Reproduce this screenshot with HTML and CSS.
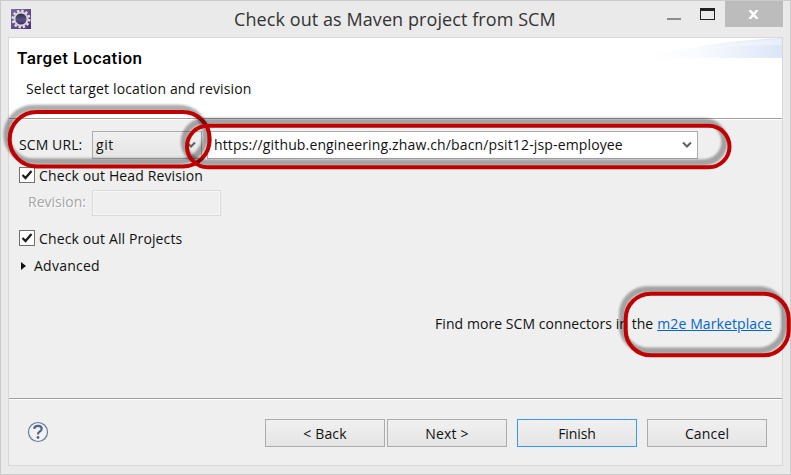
FILE: index.html
```html
<!DOCTYPE html>
<html lang="en">
<head>
<meta charset="utf-8">
<title>Check out as Maven project from SCM</title>
<link rel="stylesheet" href="styles.css">
</head>
<body>
<div class="window">
  <header class="titlebar">
    <svg class="app-icon" width="20" height="20" viewBox="0 0 20 20">
      <defs><linearGradient id="purple" x2="1" y2="1"><stop offset="0" stop-color="#7b68a6"/><stop offset="1" stop-color="#4b2d7d"/></linearGradient>
      <linearGradient id="core" x2="0" y2="1"><stop offset="0" stop-color="#252536"/><stop offset=".55" stop-color="#5b5188"/><stop offset="1" stop-color="#35265d"/></linearGradient></defs>
      <rect width="20" height="20" fill="url(#purple)"/>
      <circle cx="10" cy="10" r="8.3" fill="none" stroke="#e4e0e2" stroke-width="2.4" stroke-dasharray="2.4 1.946"/>
      <circle cx="10" cy="10" r="6.6" fill="url(#core)" stroke="#d8d4d6" stroke-width="2"/>
    </svg>
    <h1 class="title"><span>Check out as Maven project from SCM</span></h1>
    <div class="controls">
      <i class="minimize"></i><i class="maximize"></i>
      <span class="close"><svg width="11" height="9" viewBox="0 0 11 9"><path d="M1.5 0L9.5 9M9.5 0L1.5 9" stroke="#fff" stroke-width="2.5"/></svg></span>
    </div>
  </header>
  <main class="client">
    <section class="banner">
      <svg class="swoosh" width="140" height="20" viewBox="0 0 140 20">
        <defs><linearGradient id="blue"><stop offset="0" stop-color="#fff"/><stop offset=".4" stop-color="#f9fbfe"/><stop offset="1" stop-color="#dce5f8"/></linearGradient></defs>
        <path d="M0 20Q65 3 140 0V20Z" fill="url(#blue)"/>
        <path d="M55 12Q95 4 140 1V7Q95 7 55 12Z" fill="#fff" opacity=".35"/>
      </svg>
      <h2 class="heading"><span>Target Location</span></h2>
      <p class="subtitle"><span>Select target location and revision</span></p>
    </section>
    <section class="form">
      <div class="url-row">
        <label class="scm-label">SCM URL:</label>
        <div class="combo combo-git"><span class="git-text">git</span><svg class="chevron" width="10" height="8" viewBox="0 0 10 8"><path d="M1 1.5L5 5.5L9 1.5" fill="none" stroke="#606060" stroke-width="2"/></svg></div>
        <div class="combo combo-url"><span class="url">https://github.engineering.zhaw.ch/bacn/psit12-jsp-employee</span><svg class="chevron" width="10" height="8" viewBox="0 0 10 8"><path d="M1 1.5L5 5.5L9 1.5" fill="none" stroke="#606060" stroke-width="2"/></svg></div>
      </div>
      <div class="check-row head-row"><i class="box"><svg width="14" height="14" viewBox="0 0 14 14"><path d="M2.5 7L5.5 10L11.5 3" fill="none" stroke="#1c1c1c" stroke-width="2.3"/></svg></i><span class="head-text">Check out Head Revision</span></div>
      <div class="revision-row"><span class="rev-text">Revision:</span><i class="rev-input"></i></div>
      <div class="check-row all-row"><i class="box"><svg width="14" height="14" viewBox="0 0 14 14"><path d="M2.5 7L5.5 10L11.5 3" fill="none" stroke="#1c1c1c" stroke-width="2.3"/></svg></i><span class="all-text">Check out All Projects</span></div>
      <div class="advanced"><i class="arrow"></i><span class="adv-text">Advanced</span></div>
      <p class="find"><span class="find-text">Find more SCM connectors in the</span><a class="market">m2e Marketplace</a></p>
    </section>
    <footer class="footer">
      <svg class="help" width="22" height="22" viewBox="0 0 22 22"><circle cx="11" cy="11" r="9.5" fill="#f3f3f3" stroke="#6478a0" stroke-width="1.2"/><path d="M7.2 7.8Q7.4 4.9 11 4.9Q14.7 4.9 14.7 7.8Q14.7 9.4 12.7 10.6Q11 11.6 11 13.5" fill="none" stroke="#52648f" stroke-width="2.2"/><circle cx="11" cy="16.5" r="1.4" fill="#52648f"/></svg>
      <div class="button back"><span>&lt; Back</span></div>
      <div class="button next"><span>Next &gt;</span></div>
      <div class="button finish"><span>Finish</span></div>
      <div class="button cancel"><span>Cancel</span></div>
    </footer>
  </main>
</div>
<svg class="marks" width="791" height="475" viewBox="0 0 791 475">
  <defs><filter id="soft" x="-10%" y="-20%" width="120%" height="140%"><feGaussianBlur stdDeviation="1.3"/></filter></defs>
  <g class="shade" filter="url(#soft)"><rect x="6.7" y="108" width="199" height="53.5" rx="26.7"/></g>
  <rect class="ring" x="9.7" y="112" width="200" height="54.5" rx="27"/>
  <g class="shade" filter="url(#soft)"><rect x="184" y="121.2" width="540.5" height="41.2" rx="20.6"/></g>
  <rect class="ring" x="187" y="125.7" width="542.5" height="41.6" rx="20.8"/>
  <g class="shade" filter="url(#soft)"><rect x="622.2" y="289.5" width="162" height="61.2" rx="25"/></g>
  <rect class="ring" x="625.7" y="293.7" width="163" height="61.6" rx="25"/>
</svg>
</body>
</html>
```
FILE: styles.css
```css
* { box-sizing: border-box; }
body { margin: 0; font: 14px/20px "Open Sans", "Noto Sans", sans-serif; color: #111; overflow: hidden; }
h1, h2, p { margin: 0; font-weight: 400; }
i { display: block; flex: none; }
svg { display: block; flex: none; }
span, a, label { white-space: nowrap; }
.window { width: 791px; height: 475px; background: #eaeaea; border: 1px solid #cbcbcb; padding: 0 7px 8px; display: flex; flex-direction: column; }
.titlebar { height: 36px; display: flex; flex: none; align-items: flex-start; }
.app-icon { margin: 8px 0 0 3px; }
.title { flex: none; width: 322px; margin: 6px 0 0 203px; font-size: 18px; line-height: 25px; color: #333; letter-spacing: .08px; }
.controls { display: flex; margin-left: auto; }
.minimize { width: 14px; height: 2px; background: #8c8c8c; margin: 17px 19px 0 0; }
.maximize { width: 15px; height: 12px; border: 1px solid #222; border-top-width: 3px; margin: 7px 10px 0 0; }
.close { width: 58px; height: 26px; background: #bcbcbc; display: flex; align-items: center; justify-content: center; padding-right: 2px; }
.client { flex: 1; border: 1px solid #d8d8d8; background: #efefef; display: flex; flex-direction: column; }
.banner { height: 82px; background: #fff; border-bottom: 1px solid #fff; box-shadow: inset 0 -1px #a0a0a0; position: relative; flex: none; }
.swoosh { position: absolute; right: 0; top: 0; }
.heading { padding: 10px 0 0 8px; font: 500 17px/20px Roboto, sans-serif; letter-spacing: .44px; color: #000; }
.subtitle { padding: 11px 0 0 17px; letter-spacing: .15px; }
.form { height: 278px; flex: none; padding: 11px 10px 0; }
.url-row { display: flex; height: 28px; align-items: center; }
.scm-label { width: 73px; flex: none; letter-spacing: .1px; }
.combo { height: 28px; border: 1px solid #acacac; display: flex; align-items: center; justify-content: space-between; flex: none; }
.combo-git { width: 110px; padding: 0 5px 0 3px; background: linear-gradient(#f0f0f0, #e5e5e5); }
.git-text { letter-spacing: .6px; }
.combo-url { width: 491px; margin-left: 5px; padding: 0 5px 0 6px; background: #fff; letter-spacing: .14px; }
.check-row { height: 16px; display: flex; align-items: center; letter-spacing: .13px; }
.box { width: 16px; height: 16px; border: 1px solid #707070; background: #fff; margin-right: 4px; }
.head-row { margin-top: 8px; }
.head-text, .all-text { padding-top: 1px; }
.revision-row { display: flex; height: 26px; margin-top: 7px; }
.rev-text { width: 64px; margin-left: 9px; line-height: 24px; color: #a5a5a5; text-shadow: 1px 1px #fff; }
.rev-input { width: 129px; height: 26px; border: 1px solid #d9d9d9; box-shadow: inset 0 0 0 1px #f8f8f8; }
.all-row { margin-top: 14px; }
.advanced { display: flex; align-items: center; height: 20px; margin-top: 10px; letter-spacing: .25px; }
.arrow { border: solid transparent; border-width: 4px 0 4px 5px; border-left-color: #111; margin: 0 8px 0 2px; }
.find { display: flex; justify-content: flex-end; margin-top: 38px; letter-spacing: .06px; }
.market { color: #0066cc; text-decoration: underline; margin-left: 4px; letter-spacing: .1px; }
.footer { flex: 1; border-top: 1px solid #a0a0a0; box-shadow: inset 0 1px #fff; display: flex; padding: 20px 15px 0 18px; }
.help { margin-top: 2px; }
.button { width: 120px; height: 28px; border: 1px solid #acacac; background: linear-gradient(#f0f0f0, #e5e5e5); display: flex; align-items: center; justify-content: center; padding-top: 1px; letter-spacing: .15px; }
.back { margin-left: auto; }
.next { margin-left: 2px; }
.finish, .cancel { margin-left: 10px; }
.finish { border-color: #3399ff; letter-spacing: -.1px; }
.marks { position: absolute; left: 0; top: 0; pointer-events: none; }
.ring { fill: none; stroke: #c00000; stroke-width: 4; }
.shade rect { fill: none; stroke: #000; stroke-width: 6.5; stroke-opacity: .32; }
```
